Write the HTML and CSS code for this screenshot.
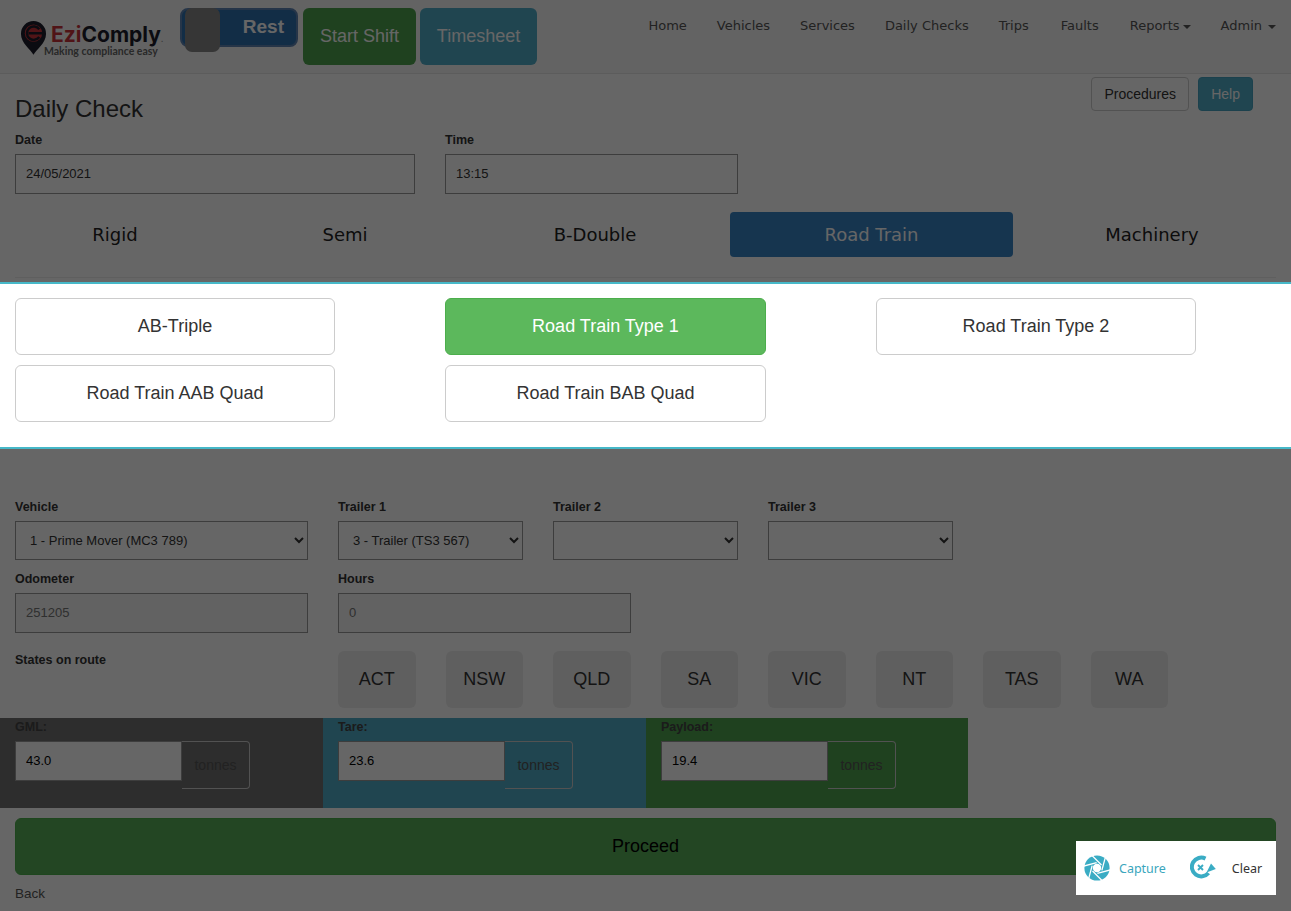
FILE: index.html
```html
<!DOCTYPE html>
<html lang="en">
<head>
  <meta charset="UTF-8">
  <title>Daily Check</title>
  <link rel="stylesheet" href="styles.css">
</head>
<body>

  <!-- Top bar -->
  <header class="topbar">
    <div class="logo">
      <svg class="logo-pin" width="27" height="35" viewBox="0 0 28 36">
        <path d="M14 36 C11 30 1 24 1 14 A13 13 0 0 1 27 14 C27 24 17 30 14 36 Z" fill="#1d1d2b"/>
        <circle cx="14" cy="13.5" r="9" fill="#c8343a"/>
        <path d="M20 9.5 A7 7 0 1 0 20 17.5 M9 13.5 H24" fill="none" stroke="#1d1d2b" stroke-width="2.6"/>
      </svg>
      <div class="logo-text">
        <div class="logo-name"><span class="logo-red">Ezi</span>Comply<span class="logo-tm">.</span></div>
        <div class="logo-tag">Making compliance easy</div>
      </div>
    </div>

    <div class="shift-toggle">
      <span class="shift-knob"></span>
      <span class="shift-label">Rest</span>
    </div>
    <button class="shift-btn shift-start">Start Shift</button>
    <button class="shift-btn shift-sheet">Timesheet</button>

    <nav class="main-nav">
      <a>Home</a>
      <a>Vehicles</a>
      <a>Services</a>
      <a>Daily Checks</a>
      <a class="nav-trips">Trips</a>
      <a class="nav-faults">Faults</a>
      <a class="caret-tight">Reports<i class="caret"></i></a>
      <a class="caret-wide">Admin<i class="caret"></i></a>
    </nav>
  </header>

  <main class="page">
    <div class="title-row">
      <h1>Daily Check</h1>
      <div class="title-actions">
        <button class="btn-plain">Procedures</button>
        <button class="btn-help">Help</button>
      </div>
    </div>

    <div class="field-row date-row">
      <div class="field date-field">
        <label>Date</label>
        <input type="text" value="24/05/2021">
      </div>
      <div class="field time-field">
        <label>Time</label>
        <input type="text" value="13:15">
      </div>
    </div>

    <!-- Vehicle type tabs -->
    <div class="type-tabs">
      <div class="type-tab">Rigid</div>
      <div class="type-tab">Semi</div>
      <div class="type-tab">B-Double</div>
      <div class="type-tab active">Road Train</div>
      <div class="type-tab">Machinery</div>
    </div>
    <hr class="tabs-line">

    <div class="field-row vehicle-row">
      <div class="field wide-field">
        <label>Vehicle</label>
        <select><option>1 - Prime Mover (MC3 789)</option></select>
      </div>
      <div class="field narrow-field">
        <label>Trailer 1</label>
        <select><option>3 - Trailer (TS3 567)</option></select>
      </div>
      <div class="field narrow-field">
        <label>Trailer 2</label>
        <select><option></option></select>
      </div>
      <div class="field narrow-field">
        <label>Trailer 3</label>
        <select><option></option></select>
      </div>
    </div>

    <div class="field-row odo-row">
      <div class="field wide-field">
        <label>Odometer</label>
        <input class="muted-input" type="text" value="251205">
      </div>
      <div class="field wide-field">
        <label>Hours</label>
        <input class="muted-input" type="text" value="0">
      </div>
    </div>

    <div class="states-row">
      <label class="states-label">States on route</label>
      <div class="states">
        <button class="state-btn">ACT</button>
        <button class="state-btn">NSW</button>
        <button class="state-btn">QLD</button>
        <button class="state-btn">SA</button>
        <button class="state-btn">VIC</button>
        <button class="state-btn">NT</button>
        <button class="state-btn">TAS</button>
        <button class="state-btn">WA</button>
      </div>
    </div>

    <!-- Mass summary -->
    <div class="mass-row">
      <div class="mass mass-gml">
        <label>GML:</label>
        <div class="mass-input"><input type="text" value="43.0"><span class="addon">tonnes</span></div>
      </div>
      <div class="mass mass-tare">
        <label>Tare:</label>
        <div class="mass-input"><input type="text" value="23.6"><span class="addon">tonnes</span></div>
      </div>
      <div class="mass mass-payload">
        <label>Payload:</label>
        <div class="mass-input"><input type="text" value="19.4"><span class="addon">tonnes</span></div>
      </div>
    </div>

    <button class="proceed">Proceed</button>
    <a class="back-link">Back</a>
  </main>

  <!-- Dialog -->
  <div class="backdrop"></div>
  <div class="combo-dialog">
    <button class="combo-btn">AB-Triple</button>
    <button class="combo-btn selected">Road Train Type 1</button>
    <button class="combo-btn">Road Train Type 2</button>
    <button class="combo-btn">Road Train AAB Quad</button>
    <button class="combo-btn">Road Train BAB Quad</button>
  </div>

  <!-- Capture bar -->
  <div class="capture-bar">
    <span class="capture-item capture-on">
      <svg width="26" height="26" viewBox="0 0 26 26">
        <circle cx="13" cy="13" r="12.6" fill="#3aacc4"/>
        <g stroke="#fff" stroke-width="1.3">
          <line x1="17.5" y1="10" x2="8" y2="0.5"/>
          <line x1="17.5" y1="10" x2="8" y2="0.5" transform="rotate(60 13 13)"/>
          <line x1="17.5" y1="10" x2="8" y2="0.5" transform="rotate(120 13 13)"/>
          <line x1="17.5" y1="10" x2="8" y2="0.5" transform="rotate(180 13 13)"/>
          <line x1="17.5" y1="10" x2="8" y2="0.5" transform="rotate(240 13 13)"/>
          <line x1="17.5" y1="10" x2="8" y2="0.5" transform="rotate(300 13 13)"/>
        </g>
        <circle cx="13" cy="13" r="4.2" fill="#fff"/>
      </svg>
      Capture
    </span>
    <span class="capture-item clear-item">
      <svg width="26" height="26" viewBox="0 0 26 26">
        <path d="M15.5 3.6 A9.4 9.4 0 1 0 18.5 18" fill="none" stroke="#3aacc4" stroke-width="4"/>
        <path d="M21 8.5 L25.8 14 L16.5 17.5 Z" fill="#3aacc4"/>
        <path d="M8 10 L13 15 M13 10 L8 15" stroke="#3aacc4" stroke-width="1.9"/>
      </svg>
      Clear
    </span>
  </div>

</body>
</html>
```

FILE: styles.css
```css
* {
  box-sizing: border-box;
  margin: 0;
  padding: 0;
}

body {
  font-family: "Liberation Sans", Arial, sans-serif;
  font-size: 13px;
  color: #333;
  background: #fff;
  height: 911px;
  overflow: hidden;
}

/* Top bar */
.topbar {
  display: flex;
  align-items: flex-start;
  height: 74px;
  padding: 8px 15px 0 20px;
  border-bottom: 1px solid #e7e7e7;
  background: #f8f8f8;
}

.logo {
  display: flex;
  align-items: flex-start;
  gap: 4px;
  width: 160px;
  padding-top: 12px;
}

.logo-text {
  padding-top: 4px;
}

.logo-name {
  font-family: Inter, sans-serif;
  font-weight: 700;
  font-size: 21px;
  line-height: 21px;
  color: #1d1d2b;
}

.logo-red {
  color: #c8343a;
}

.logo-tm {
  color: #888;
  font-size: 8px;
}

.logo-tag {
  margin: -5px 0 0 -7px;
  font-family: Lato, sans-serif;
  font-weight: 700;
  font-size: 10.5px;
  line-height: 13px;
  color: #666;
  white-space: nowrap;
}

.shift-toggle {
  position: relative;
  width: 118px;
  height: 39px;
  border: 2px solid #5f85b5;
  border-radius: 8px;
  background: #2f70ae;
  color: #fff;
  font-weight: bold;
  font-size: 19px;
  line-height: 22px;
  text-align: right;
  padding: 6px 12px 0 0;
}

.shift-knob {
  position: absolute;
  left: 3px;
  top: -2px;
  width: 35px;
  height: 44px;
  background: #888;
  border-radius: 7px;
}

.shift-btn {
  height: 57px;
  margin-left: 5px;
  border: 1px solid transparent;
  border-radius: 6px;
  color: #fff;
  font-family: inherit;
  font-size: 18px;
}

.shift-start {
  width: 113px;
  background: #4ea24e;
}

.shift-sheet {
  width: 117px;
  margin-left: 4px;
  background: #50acc8;
}

.main-nav {
  display: flex;
  gap: 30px;
  margin-left: auto;
  padding-top: 10px;
  font-family: "DejaVu Sans", Verdana, sans-serif;
  font-size: 13px;
  line-height: 16px;
  color: #555;
}

.nav-trips {
  margin-right: 2px;
}

.nav-faults {
  margin-right: 1px;
}

.caret {
  display: inline-block;
  margin-left: 3px;
  vertical-align: middle;
  border-top: 4px solid #555;
  border-left: 4px solid transparent;
  border-right: 4px solid transparent;
}

.caret-wide .caret {
  margin-left: 6px;
}

/* Page */
.page {
  padding: 0 15px;
}

.title-row {
  display: flex;
  justify-content: space-between;
  height: 58px;
}

h1 {
  font-size: 24px;
  font-weight: normal;
  line-height: 28px;
  padding-top: 21px;
}

.title-actions {
  display: flex;
  gap: 9px;
  height: 34px;
  margin: 3px 23px 0 0;
}

.title-actions button {
  font-family: inherit;
  font-size: 14px;
  border-radius: 4px;
  padding: 0 12px;
}

.title-actions .btn-plain {
  width: 98px;
  padding: 0;
  background: #fff;
  border: 1px solid #ccc;
  color: #333;
}

.btn-help {
  background: #50acc8;
  border: 1px solid #46a4c0;
  color: #fff;
}

.field-row {
  display: flex;
  gap: 30px;
}

label {
  display: block;
  font-size: 12.5px;
  font-weight: bold;
  line-height: 14px;
  padding-top: 1px;
  margin-bottom: 7px;
}

.field input,
.field select {
  display: block;
  width: 100%;
  height: 40px;
  padding: 0 10px 2px;
  border: 1px solid #999;
  background: #fff;
  font-family: inherit;
  font-size: 13px;
  color: #333;
  border-radius: 0;
}

.field select {
  height: 39px;
  padding-bottom: 0;
}

.field .muted-input {
  color: #777;
  background: #f4f4f4;
}

.date-field {
  width: 400px;
}

.time-field {
  width: 293px;
}

/* Tabs */
.type-tabs {
  display: grid;
  grid-template-columns: 230px 230px 270px 283px 278px;
  margin: 18px -15px 0;
}

.type-tab {
  height: 45px;
  border-radius: 4px;
  font-family: "DejaVu Sans", Verdana, sans-serif;
  font-size: 18px;
  line-height: 45px;
  text-align: center;
  color: #222;
}

.type-tab.active {
  background: #3784c6;
  color: #fff;
}

.tabs-line {
  margin-top: 20px;
  border: 0;
  border-top: 1px solid #eee;
}

.vehicle-row {
  margin-top: 221px;
}

.wide-field {
  width: 293px;
}

.narrow-field {
  width: 185px;
}

.odo-row {
  margin-top: 11px;
}

/* States */
.states-row {
  display: flex;
  gap: 30px;
  margin-top: 18px;
}

.states-label {
  width: 293px;
  margin-top: 1px;
}

.states {
  display: flex;
  gap: 30px;
}

.state-btn {
  width: 77.5px;
  height: 57px;
  border: 0;
  border-radius: 6px;
  background: #eee;
  color: #333;
  font-family: inherit;
  font-size: 18px;
}

/* Mass summary */
.mass-row {
  display: grid;
  grid-template-columns: 323px 323px 322px;
  margin: 10px -15px 0;
}

.mass {
  height: 90px;
  padding: 1px 0 0 15px;
}

.mass label {
  color: #444;
}

.mass-gml {
  background: #707070;
}

.mass-tare {
  background: #50acc8;
}

.mass-payload {
  background: #4ea24e;
}

.mass-input {
  display: flex;
  align-items: flex-start;
}

.mass-input input {
  width: 167px;
  height: 40px;
  padding: 0 10px 2px;
  border: 1px solid #999;
  background: #fff;
  font-family: inherit;
  font-size: 13px;
  color: #000;
}

.addon {
  width: 68px;
  height: 48px;
  border: 1px solid #ccc;
  border-left: 0;
  border-radius: 0 4px 4px 0;
  font-size: 14px;
  line-height: 46px;
  text-align: center;
  color: #555;
}

.proceed {
  display: block;
  width: 100%;
  height: 57px;
  margin-top: 10px;
  border: 1px solid #4cae4c;
  border-radius: 6px;
  background: #58ae58;
  color: #000;
  font-family: inherit;
  font-size: 18px;
}

.back-link {
  display: block;
  margin-top: 11px;
  font-size: 13.5px;
  line-height: 16px;
  color: #555;
}

/* Dialog */
.backdrop {
  position: fixed;
  inset: 0;
  background: rgba(0, 0, 0, 0.6);
}

.combo-dialog {
  position: absolute;
  top: 282px;
  left: 0;
  right: 0;
  height: 167px;
  padding: 14px 0 0 15px;
  display: grid;
  grid-template-columns: 320px 321px 320px;
  grid-auto-rows: 57px;
  gap: 10px 110px;
  background: #fff;
  border-top: 2px solid #46b8c8;
  border-bottom: 2px solid #46b8c8;
}

.combo-btn {
  border: 1px solid #ccc;
  border-radius: 6px;
  background: #fff;
  color: #333;
  font-family: inherit;
  font-size: 18px;
}

.combo-btn.selected {
  background: #5cb85c;
  border-color: #4cae4c;
  color: #fff;
}

/* Capture bar */
.capture-bar {
  position: fixed;
  left: 1076px;
  top: 841px;
  width: 200px;
  height: 54px;
  display: flex;
  align-items: center;
  padding-left: 8px;
  background: #fff;
  font-family: "Noto Sans", sans-serif;
  font-size: 12.5px;
  color: #333;
}

.capture-item {
  display: flex;
  align-items: center;
}

.capture-on {
  gap: 9px;
  color: #3aa6bd;
}

.clear-item {
  gap: 16px;
  margin-left: 24px;
}
```
